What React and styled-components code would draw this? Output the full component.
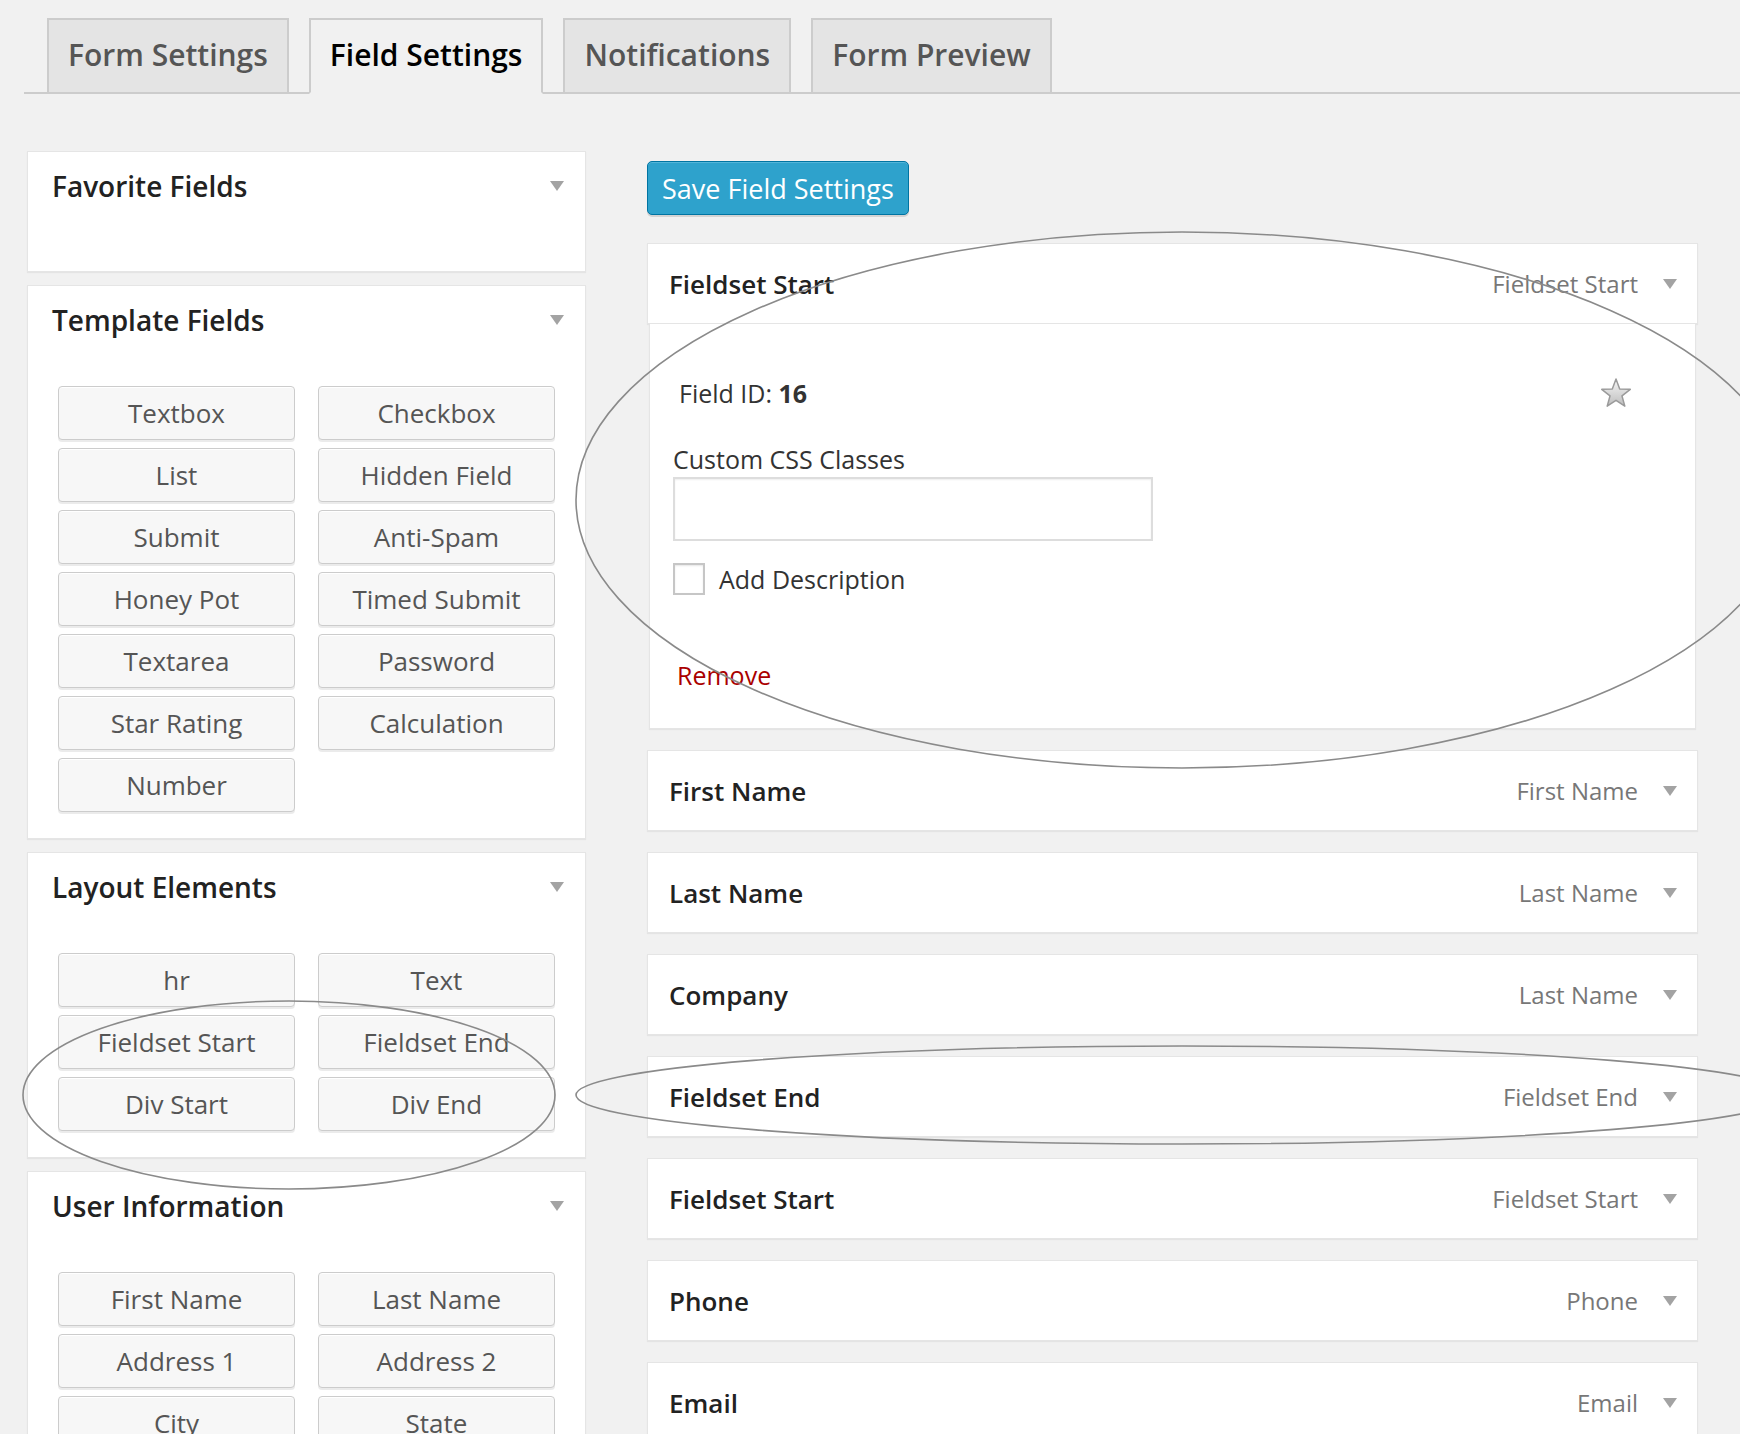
import React from 'react'
import styled, { createGlobalStyle } from 'styled-components'

const GlobalStyle = createGlobalStyle`
  html, body {
    margin: 0;
    padding: 0;
    background: #f1f1f1;
    overflow: hidden;
  }
  body {
    font-family: "Open Sans", "Liberation Sans", sans-serif;
  }
`

const Page = styled.div`
  position: relative;
  width: 1740px;
  height: 1434px;
  overflow: hidden;
  background: #f1f1f1;
`

const TabBar = styled.nav`
  display: flex;
  align-items: flex-end;
  gap: 20px;
  margin-left: 24px;
  padding: 18px 0 0 23px;
  border-bottom: 2px solid #ccc;
`

const Tab = styled.a`
  display: block;
  font-size: 30px;
  font-weight: 600;
  line-height: 42px;
  padding: 14px 19px 16px;
  margin-bottom: -2px;
  border: 2px solid #ccc;
  border-bottom-color: ${({ $active }) => ($active ? '#f1f1f1' : '#ccc')};
  background: ${({ $active }) => ($active ? '#f1f1f1' : '#e4e4e4')};
  color: ${({ $active }) => ($active ? '#000' : '#555')};
  text-decoration: none;
  cursor: pointer;
`

const Main = styled.main`
  display: flex;
  align-items: flex-start;
  gap: 61px;
  padding: 57px 42px 0 27px;
`

const Sidebar = styled.aside`
  width: 559px;
  flex: none;
  display: flex;
  flex-direction: column;
  gap: 13px;
`

const Panel = styled.section`
  background: #fff;
  border: 1px solid #e5e5e5;
  box-shadow: 0 1px 1px rgba(0, 0, 0, 0.05);
`

const PanelHead = styled.header`
  display: flex;
  align-items: center;
  justify-content: space-between;
  padding: 15px 21px 0 24px;

  h3 {
    margin: 0;
    font-size: 28px;
    font-weight: 600;
    line-height: 38px;
    color: #222;
  }
`

const Arrow = styled.span`
  width: 0;
  height: 0;
  border-left: 7px solid transparent;
  border-right: 7px solid transparent;
  border-top: 10px solid #a3a3a3;
  flex: none;
`

const PanelBody = styled.div`
  display: grid;
  grid-template-columns: 237px 237px;
  column-gap: 23px;
  row-gap: 8px;
  padding: ${({ $empty }) => ($empty ? '0' : '47px 30px 26px')};
  height: ${({ $empty }) => ($empty ? '66px' : 'auto')};
`

const FieldButton = styled.button`
  height: 54px;
  padding: 0;
  border: 1px solid #ccc;
  border-radius: 4px;
  background: #f7f7f7;
  box-shadow: inset 0 1px 0 #fff, 0 2px 0 rgba(0, 0, 0, 0.08);
  font-family: inherit;
  font-size: 26px;
  color: #555;
  cursor: pointer;
`

const Content = styled.div`
  flex: 1;
  display: flex;
  flex-direction: column;
  gap: 21px;
  padding-top: 10px;
`

const SaveButton = styled.button`
  align-self: flex-start;
  height: 54px;
  padding: 0 14px;
  margin-bottom: 7px;
  border: 1px solid #0074a2;
  border-radius: 5px;
  background: #2ea2cc;
  box-shadow: inset 0 1px 0 rgba(120, 200, 230, 0.5), 0 2px 0 rgba(0, 0, 0, 0.12);
  font-family: inherit;
  font-size: 27px;
  color: #fff;
  cursor: pointer;
`

const FieldRow = styled.div`
  display: flex;
  flex-direction: column;
`

const RowHead = styled.div`
  display: flex;
  align-items: center;
  height: 81px;
  box-sizing: border-box;
  padding: 0 20px 0 21px;
  background: #fff;
  border: 1px solid #e5e5e5;
  box-shadow: 0 1px 1px rgba(0, 0, 0, 0.05);
`

const RowTitle = styled.span`
  flex: 1;
  font-size: 26px;
  font-weight: 600;
  color: #222;
`

const RowLabel = styled.span`
  margin-right: 25px;
  font-size: 24px;
  color: #777;
`

const RowBody = styled.div`
  margin: 0 2px;
  padding: 52px 23px 36px;
  background: #fff;
  border: 1px solid #e5e5e5;
  border-top: none;
  box-shadow: 0 1px 1px rgba(0, 0, 0, 0.05);
  font-size: 25px;
  color: #333;
`

const IdLine = styled.div`
  display: flex;
  align-items: center;
  justify-content: space-between;
  height: 34px;
  padding: 0 40px 0 6px;

  strong {
    font-weight: 700;
  }
`

const FieldLabel = styled.label`
  display: block;
  margin-top: 32px;
  line-height: 34px;
`

const TextInput = styled.input`
  display: block;
  width: 480px;
  height: 64px;
  margin-top: 1px;
  box-sizing: border-box;
  border: 2px solid #ddd;
  box-shadow: inset 0 1px 2px rgba(0, 0, 0, 0.07);
  font-family: inherit;
  font-size: 25px;
  outline: none;
`

const CheckLine = styled.label`
  display: flex;
  align-items: center;
  gap: 14px;
  height: 32px;
  margin-top: 22px;
`

const CheckBox = styled.span`
  width: 32px;
  height: 32px;
  box-sizing: border-box;
  border: 2px solid #c6c6c6;
  background: #fff;
  box-shadow: inset 0 1px 2px rgba(0, 0, 0, 0.1);
`

const RemoveLink = styled.a`
  display: block;
  margin: 63px 0 0 4px;
  line-height: 34px;
  color: #a00;
  text-decoration: none;
  cursor: pointer;
`

const Notes = styled.svg`
  position: absolute;
  top: 0;
  left: 0;
  pointer-events: none;

  ellipse {
    fill: none;
    stroke: #8a8a8a;
    stroke-width: 1.6;
  }
`

const Star = () => (
  <svg width="32" height="32" viewBox="0 0 32 32">
    <defs>
      <linearGradient id="starFill" x1="0" y1="0" x2="0" y2="1">
        <stop offset="0" stopColor="#f6f6f6" />
        <stop offset="1" stopColor="#bdbdbd" />
      </linearGradient>
    </defs>
    <polygon
      points="16,2 19.7,11.9 30.27,12.36 21.99,18.95 24.82,29.14 16,23.3 7.18,29.14 10.01,18.95 1.73,12.36 12.3,11.9"
      fill="url(#starFill)"
      stroke="#9a9a9a"
      strokeWidth="1.5"
      strokeLinejoin="round"
    />
  </svg>
)

const tabs = ['Form Settings', 'Field Settings', 'Notifications', 'Form Preview']

const panels = [
  { title: 'Favorite Fields', items: [] },
  {
    title: 'Template Fields',
    items: ['Textbox', 'Checkbox', 'List', 'Hidden Field', 'Submit', 'Anti-Spam', 'Honey Pot', 'Timed Submit', 'Textarea', 'Password', 'Star Rating', 'Calculation', 'Number'],
  },
  {
    title: 'Layout Elements',
    items: ['hr', 'Text', 'Fieldset Start', 'Fieldset End', 'Div Start', 'Div End'],
  },
  {
    title: 'User Information',
    items: ['First Name', 'Last Name', 'Address 1', 'Address 2', 'City', 'State', 'Zip / Post Code', 'Country', 'Email', 'Phone'],
  },
]

const rows = [
  ['First Name', 'First Name'],
  ['Last Name', 'Last Name'],
  ['Company', 'Last Name'],
  ['Fieldset End', 'Fieldset End'],
  ['Fieldset Start', 'Fieldset Start'],
  ['Phone', 'Phone'],
  ['Email', 'Email'],
]

const App = () => {
  return (
    <Page>
      <GlobalStyle />
      <TabBar>
        {tabs.map((t) => (
          <Tab key={t} $active={t === 'Field Settings'}>{t}</Tab>
        ))}
      </TabBar>

      <Main>
        <Sidebar>
          {panels.map((p) => (
            <Panel key={p.title}>
              <PanelHead>
                <h3>{p.title}</h3>
                <Arrow />
              </PanelHead>
              <PanelBody $empty={p.items.length === 0}>
                {p.items.map((item) => (
                  <FieldButton key={item}>{item}</FieldButton>
                ))}
              </PanelBody>
            </Panel>
          ))}
        </Sidebar>

        <Content>
          <SaveButton>Save Field Settings</SaveButton>

          <FieldRow>
            <RowHead>
              <RowTitle>Fieldset Start</RowTitle>
              <RowLabel>Fieldset Start</RowLabel>
              <Arrow />
            </RowHead>
            <RowBody>
              <IdLine>
                <span>Field ID: <strong>16</strong></span>
                <Star />
              </IdLine>
              <FieldLabel>Custom CSS Classes</FieldLabel>
              <TextInput type="text" />
              <CheckLine>
                <CheckBox />
                Add Description
              </CheckLine>
              <RemoveLink>Remove</RemoveLink>
            </RowBody>
          </FieldRow>

          {rows.map(([title, label], i) => (
            <FieldRow key={i}>
              <RowHead>
                <RowTitle>{title}</RowTitle>
                <RowLabel>{label}</RowLabel>
                <Arrow />
              </RowHead>
            </FieldRow>
          ))}
        </Content>
      </Main>

      <Notes width="1740" height="1434" viewBox="0 0 1740 1434">
        <ellipse cx="1182" cy="500" rx="606" ry="268" />
        <ellipse cx="289" cy="1095" rx="266" ry="94" />
        <ellipse cx="1182" cy="1095" rx="606" ry="49" />
      </Notes>
    </Page>
  )
}

export default App
